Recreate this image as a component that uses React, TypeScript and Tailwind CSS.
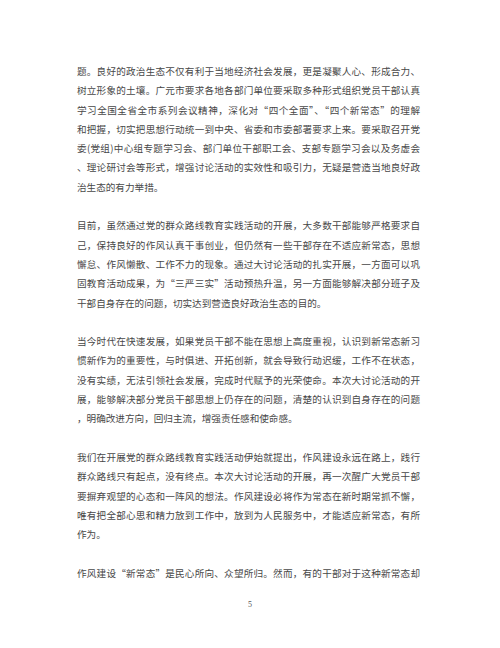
import React from "react";

// Each paragraph is a list of printed lines; all but the last are justified to full width.
const paragraphs: string[][] = [
  [
    "题。良好的政治生态不仅有利于当地经济社会发展，更是凝聚人心、形成合力、",
    "树立形象的土壤。广元市要求各地各部门单位要采取多种形式组织党员干部认真",
    "学习全国全省全市系列会议精神，深化对“四个全面”、“四个新常态”的理解",
    "和把握，切实把思想行动统一到中央、省委和市委部署要求上来。要采取召开党",
    "委(党组)中心组专题学习会、部门单位干部职工会、支部专题学习会以及务虚会",
    "、理论研讨会等形式，增强讨论活动的实效性和吸引力，无疑是营造当地良好政",
    "治生态的有力举措。",
  ],
  [
    "目前，虽然通过党的群众路线教育实践活动的开展，大多数干部能够严格要求自",
    "己，保持良好的作风认真干事创业，但仍然有一些干部存在不适应新常态，思想",
    "懈怠、作风懒散、工作不力的现象。通过大讨论活动的扎实开展，一方面可以巩",
    "固教育活动成果，为“三严三实”活动预热升温，另一方面能够解决部分班子及",
    "干部自身存在的问题，切实达到营造良好政治生态的目的。",
  ],
  [
    "当今时代在快速发展，如果党员干部不能在思想上高度重视，认识到新常态新习",
    "惯新作为的重要性，与时俱进、开拓创新，就会导致行动迟缓，工作不在状态，",
    "没有实绩，无法引领社会发展，完成时代赋予的光荣使命。本次大讨论活动的开",
    "展，能够解决部分党员干部思想上仍存在的问题，清楚的认识到自身存在的问题",
    "，明确改进方向，回归主流，增强责任感和使命感。",
  ],
  [
    "我们在开展党的群众路线教育实践活动伊始就提出，作风建设永远在路上，践行",
    "群众路线只有起点，没有终点。本次大讨论活动的开展，再一次醒广大党员干部",
    "要摒弃观望的心态和一阵风的想法。作风建设必将作为常态在新时期常抓不懈，",
    "唯有把全部心思和精力放到工作中，放到为人民服务中，才能适应新常态，有所",
    "作为。",
  ],
  ["作风建设“新常态”是民心所向、众望所归。然而，有的干部对于这种新常态却"],
];

export default function App() {
  return (
    <div className="w-[500px] h-[648px] bg-white overflow-hidden font-['Noto_Sans_CJK_SC','Noto_Sans',sans-serif] text-[#474747]">
      <div className="ml-[77px] w-[343px] pt-[62px] flex flex-col gap-[19.3px]">
        {paragraphs.map((lines, i) => (
          <div key={i} className="flex flex-col">
            {lines.map((line, j) => {
              const last = j === lines.length - 1 && i !== paragraphs.length - 1;
              return (
                <div
                  key={j}
                  className={
                    last
                      ? "h-[19.3px] leading-[19.3px] text-[9.6px] whitespace-nowrap"
                      : "h-[19.3px] leading-[19.3px] text-[9.6px] whitespace-nowrap text-justify [text-align-last:justify]"
                  }
                >
                  {line}
                </div>
              );
            })}
          </div>
        ))}
      </div>
      <div className="mt-[17px] text-center text-[8px] leading-[10px] text-[#555] font-['Liberation_Serif',serif]">
        5
      </div>
    </div>
  );
}
